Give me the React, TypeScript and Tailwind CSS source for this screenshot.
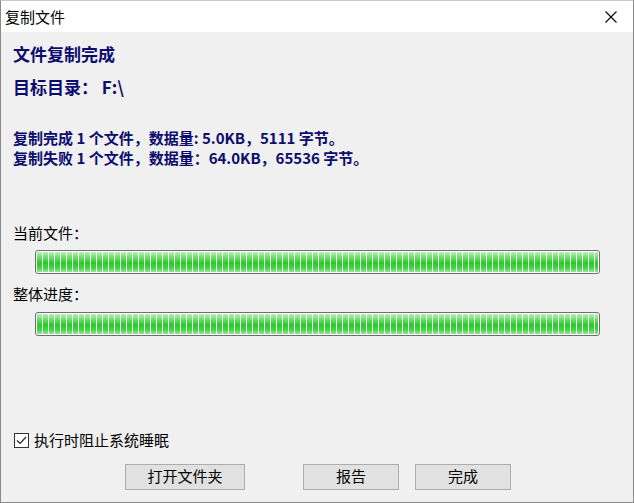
import React from "react";

const segs = Array.from({ length: 94 }, (_, i) => i);

function Bar() {
  return (
    <div className="ml-[34px] w-[565px] h-[24px] border border-[#6e6e6e] rounded-[3px] bg-white p-[1px] overflow-hidden">
      <div className="flex h-full gap-[1px] overflow-hidden">
        {segs.map((i) => (
          <div
            key={i}
            className="shrink-0 w-[5px] h-full bg-[linear-gradient(to_bottom,#b8f0b8_0%,#66dc66_30%,#27cb27_55%,#46d346_80%,#97e697_100%)]"
          />
        ))}
      </div>
    </div>
  );
}

export default function App() {
  const font = "font-['Microsoft_YaHei','Noto_Sans_CJK_SC',sans-serif]";
  return (
    <div className={`w-[634px] h-[503px] border border-[#8a8a8a] border-t-[#c8c8c8] bg-[#f0f0f0] flex flex-col ${font}`}>
      <div className="h-[31px] bg-white flex items-center justify-between shrink-0">
        <span className="pl-[4px] text-[15px] leading-none text-black">复制文件</span>
        <svg width="12" height="12" viewBox="0 0 12 12" className="mr-[16px]">
          <path d="M0.5 0.5 L11.5 11.5 M11.5 0.5 L0.5 11.5" stroke="#000" strokeWidth="1.1" />
        </svg>
      </div>
      <div className="flex flex-col flex-1 relative">
        <div className="mt-[12px] ml-[12px] h-[20px] text-[17px] leading-[20px] font-bold text-[#0c0c6e]">文件复制完成</div>
        <div className="mt-[13px] ml-[12px] h-[20px] text-[17px] leading-[20px] font-bold text-[#0c0c6e]">
          目标目录：&nbsp;F:\
        </div>
        <div className="mt-[31px] ml-[12px] text-[15px] leading-[20px] font-bold text-[#0c0c6e]">
          <div>复制完成 1 个文件，数据量: 5.0KB，5111 字节。</div>
          <div>复制失败 1 个文件，数据量：64.0KB，65536 字节。</div>
        </div>
        <div className="mt-[55px] ml-[12px] text-[15px] leading-[20px] text-black">当前文件：</div>
        <div className="mt-[7px]">
          <Bar />
        </div>
        <div className="mt-[10px] ml-[12px] text-[15px] leading-[20px] text-black">整体进度：</div>
        <div className="mt-[8px]">
          <Bar />
        </div>
        <div className="mt-auto ml-[13px] flex items-center gap-[5px] h-[16px]">
          <div className="w-[15px] h-[15px] border border-[#333] bg-white flex items-center justify-center">
            <svg width="11" height="9" viewBox="0 0 11 9">
              <path d="M1 4.5 L4 7.5 L10 1" stroke="#222" strokeWidth="1.2" fill="none" />
            </svg>
          </div>
          <span className="text-[15px] leading-none text-black pb-[2px]">执行时阻止系统睡眠</span>
        </div>
        <div className="mt-[16px] mb-[12px] flex h-[26px]">
          <button className="ml-[124px] w-[120px] h-[26px] border border-[#adadad] bg-[#e1e1e1] text-[15px] leading-none text-black pb-[3px]">打开文件夹</button>
          <button className="ml-[58px] w-[96px] h-[26px] border border-[#adadad] bg-[#e1e1e1] text-[15px] leading-none text-black pb-[3px]">报告</button>
          <button className="ml-[16px] w-[96px] h-[26px] border border-[#adadad] bg-[#e1e1e1] text-[15px] leading-none text-black pb-[3px]">完成</button>
        </div>
      </div>
    </div>
  );
}
